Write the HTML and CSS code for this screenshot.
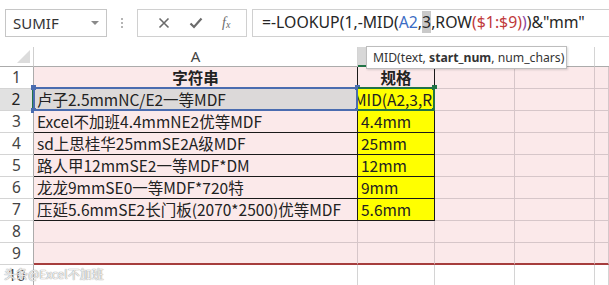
FILE: index.html
```html
<!DOCTYPE html>
<html>
<head>
<meta charset="utf-8">
<link rel="stylesheet" href="styles.css">
</head>
<body>
<div class="fbar">
  <div class="namebox"><span>SUMIF</span><span class="dd"></span></div>
  <div class="dots"><i></i><i></i><i></i></div>
  <div class="btns">
    <svg class="ico" width="12" height="12" viewBox="0 0 12 12"><path d="M1.5 1.5L10.5 10.5M10.5 1.5L1.5 10.5" stroke="#6b6b6b" stroke-width="1.6"/></svg>
    <svg class="ico" width="14" height="12" viewBox="0 0 14 12"><path d="M1.5 6.5L5 10L12.5 1.5" stroke="#6b6b6b" stroke-width="2.2" fill="none"/></svg>
    <span class="fx">f<sub>x</sub></span>
  </div>
  <div class="fbox">=-LOOKUP(1,-MID(<span class="blue">A2</span>,<span class="hl">3</span>,ROW<span class="red">(</span><span class="red">$1:$9</span><span class="red">)</span><span class="pur">)</span>)&amp;"mm"</div>
</div>

<div class="sheet">
  <div class="corner"><span class="tri"></span></div>
  <div class="ch">A</div>
  <div class="ch chsel"></div>
  <div class="ch"></div>
  <div class="ch"></div>
  <div class="ch last"></div>

  <div class="rh">1</div>
  <div class="c pk bk b">字符串</div>
  <div class="c pk bk b ctr">规格</div>
  <div class="c pk"></div><div class="c pk"></div><div class="c pk last"></div>

  <div class="rh rhsel">2</div>
  <div class="c sel bk">卢子2.5mmNC/E2一等MDF<span class="selbox"><i class="h tl"></i><i class="h tr"></i><i class="h bl"></i><i class="h br"></i></span></div>
  <div class="c yl bk act"><span class="edit">MID(A2,3,R</span><span class="actbox"><i class="g tr"></i><i class="g br"></i></span></div>
  <div class="c pk"></div><div class="c pk"></div><div class="c pk last"></div>

  <div class="rh">3</div>
  <div class="c pk bk">Excel不加班4.4mmNE2优等MDF</div>
  <div class="c yl bk">4.4mm</div>
  <div class="c pk"></div><div class="c pk"></div><div class="c pk last"></div>

  <div class="rh">4</div>
  <div class="c pk bk">sd上思桂华25mmSE2A级MDF</div>
  <div class="c yl bk">25mm</div>
  <div class="c pk"></div><div class="c pk"></div><div class="c pk last"></div>

  <div class="rh">5</div>
  <div class="c pk bk">路人甲12mmSE2一等MDF*DM</div>
  <div class="c yl bk">12mm</div>
  <div class="c pk"></div><div class="c pk"></div><div class="c pk last"></div>

  <div class="rh">6</div>
  <div class="c pk bk">龙龙9mmSE0一等MDF*720特</div>
  <div class="c yl bk">9mm</div>
  <div class="c pk"></div><div class="c pk"></div><div class="c pk last"></div>

  <div class="rh">7</div>
  <div class="c pk bk">压延5.6mmSE2长门板(2070*2500)优等MDF</div>
  <div class="c yl bk">5.6mm</div>
  <div class="c pk"></div><div class="c pk"></div><div class="c pk last"></div>

  <div class="rh">8</div>
  <div class="c pk"></div><div class="c pk"></div><div class="c pk"></div><div class="c pk"></div><div class="c pk last"></div>

  <div class="rh">9</div>
  <div class="c pk rd"></div><div class="c pk rd"></div><div class="c pk rd"></div><div class="c pk rd"></div><div class="c pk rd last"></div>

  <div class="rh">10</div>
  <div class="c"></div><div class="c"></div><div class="c"></div><div class="c"></div><div class="c last"></div>
</div>

<div class="tip">MID(text, <b>start_num</b>, num_chars)</div>
<div class="wm">头条@Excel不加班</div>
</body>
</html>
```

FILE: styles.css
```css
* { box-sizing: border-box; }
html, body { margin: 0; padding: 0; background: #fff; overflow: hidden; }
body {
  width: 609px; height: 285px;
  font-family: "Noto Sans CJK SC", "Noto Sans", sans-serif;
  color: #222;
  position: relative;
}

.fbar {
  height: 47px;
  display: flex;
  align-items: flex-start;
  padding: 9px 0 0 5px;
}
.namebox {
  width: 102px; height: 28px;
  border: 1px solid #c6c6c6;
  display: flex; align-items: center; justify-content: space-between;
  padding: 0 7px 0 7px;
  font-family: "Noto Sans", sans-serif;
  font-size: 15px; color: #333;
}
.dd {
  width: 0; height: 0;
  border-left: 4px solid transparent; border-right: 4px solid transparent;
  border-top: 4px solid #8a8a8a;
}
.dots {
  width: 30px; height: 28px;
  display: flex; flex-direction: column; align-items: center; justify-content: center; gap: 2px;
}
.dots i { display: block; width: 2px; height: 2px; background: #b5b5b5; }
.btns {
  width: 110px; height: 28px;
  border: 1px solid #d0d0d0;
  display: flex; align-items: center; justify-content: space-around;
  padding: 0 6px 0 10px;
}
.fx {
  font-family: "Liberation Serif", serif; font-style: italic;
  font-size: 14px; color: #6b6b6b; line-height: 1;
}
.fx sub { font-size: 10px; vertical-align: baseline; position: relative; top: 1px; }
.fbox {
  margin-left: 5px;
  flex: 1; height: 28px;
  border: 1px solid #d0d0d0; border-right: none;
  padding: 0 0 0 9px;
  font-family: "Noto Sans", sans-serif;
  font-size: 15.8px; line-height: 25px; color: #262626;
  white-space: nowrap;
}
.blue { color: #3b6cc4; }
.hl { background: #c9c9c9; }
.red { color: #c0393b; }
.pur { color: #8d4aa8; }

.sheet {
  display: grid;
  grid-template-columns: 34px 324px 77px 80px 80px 1fr;
  grid-template-rows: 20px repeat(9, 22px) 1fr;
  height: 238px;
}
.corner {
  border-right: 1px solid #cfcfcf;
  border-bottom: 1px solid #ababab;
  position: relative;
}
.tri {
  position: absolute; right: 3px; bottom: 3px;
  width: 0; height: 0;
  border-left: 13px solid transparent;
  border-bottom: 13px solid #dcdcdc;
}
.ch {
  border-right: 1px solid #d4d4d4;
  border-bottom: 1px solid #ababab;
  font-family: "Noto Sans", sans-serif;
  font-size: 15px; line-height: 19px; color: #444;
  text-align: center;
}
.chsel { background: #d8d8d8; border-bottom: 2px solid #217346; }
.last { border-right: none; }

.rh {
  border-right: 1px solid #ababab;
  border-bottom: 1px solid #d4d4d4;
  font-family: "Noto Sans", sans-serif;
  font-size: 15.5px; line-height: 21px; color: #444;
  text-align: center;
}
.rhsel { background: #e1e1e1; color: #222; border-right: 2px solid #217346; }

.c {
  border-right: 1px solid #d4d4d4;
  border-bottom: 1px solid #d4d4d4;
  font-size: 15.5px; line-height: 21px;
  padding-left: 3px;
  white-space: nowrap; overflow: visible;
  position: relative;
}
.pk { background: #fbe9ea; border-color: #d6c6c9; }
.bk { border-right-color: #1a1a1a; border-bottom-color: #1a1a1a; }
.b { font-weight: 700; text-align: center; padding-left: 0; }
.yl { background: #ffff00; overflow: hidden; }
.sel { background: #dcd9d9; }
.rd { border-bottom: 2px solid #a63d3d; }

.selbox {
  position: absolute; left: -1px; top: -2px; right: -1px; bottom: -1px;
  border: 2px solid #4a6cb0;
}
.h { position: absolute; width: 5px; height: 5px; background: #4a6cb0; }
.tl { left: -4px; top: -4px; }
.tr { right: -4px; top: -4px; }
.bl { left: -4px; bottom: -4px; }
.br { right: -4px; bottom: -4px; }
.act { padding-left: 0; overflow: visible; }
.edit {
  display: block; overflow: hidden; width: 75px;
  text-indent: -4px;
}
.actbox {
  position: absolute; left: 0; top: -2px; right: -1px; bottom: -1px;
  border: 2px solid #217346; border-left: none;
}
.g { position: absolute; width: 5px; height: 5px; background: #217346; }

.tip {
  position: absolute; left: 366px; top: 46px;
  width: 201px; height: 23px;
  background: #fff;
  border: 1px solid #bdbdbd;
  box-shadow: 1px 1px 2px rgba(0,0,0,0.15);
  font-family: "Noto Sans", sans-serif;
  font-size: 12.2px; line-height: 21px; color: #333;
  padding-left: 6px;
  white-space: nowrap;
}
.tip b { font-weight: 700; }
.wm {
  position: absolute; left: 4px; top: 266px;
  font-size: 12px; line-height: 16px;
  color: rgba(255,255,255,0.85);
  text-shadow: 0 0 1px #9a9a9a, 0 0 1px #9a9a9a;
}
```
